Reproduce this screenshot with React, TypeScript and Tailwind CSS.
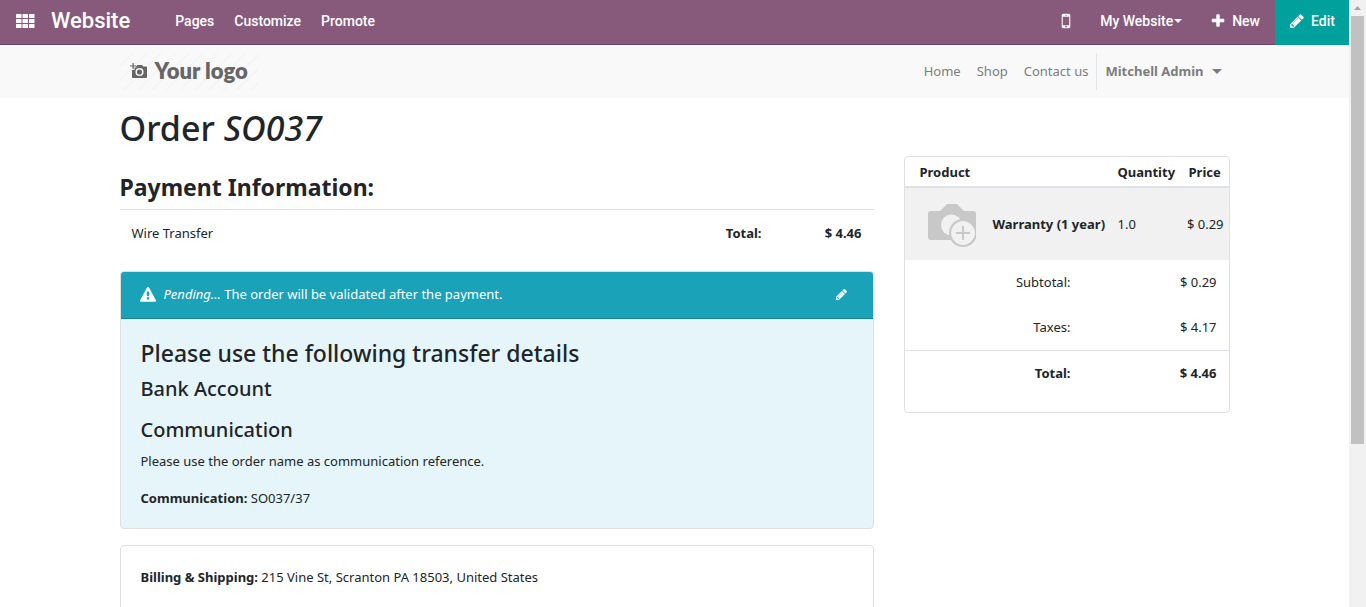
import { ReactNode } from 'react';

const ICONS = {
  pencil:
    'M491 1536l91-91-235-235-91 91v107h128v128h107zm523-928q0-22-22-22-10 0-17 7l-542 542q-7 7-7 17 0 22 22 22 10 0 17-7l542-542q7-7 7-17zm-54-192l416 416-832 832h-416v-416zm683 96q0 53-37 90l-166 166-416-416 166-165q36-38 90-38 53 0 91 38l235 234q37 39 37 91z',
  plus: 'M1600 736v192q0 40-28 68t-68 28h-416v416q0 40-28 68t-68 28h-192q-40 0-68-28t-28-68v-416h-416q-40 0-68-28t-28-68v-192q0-40 28-68t68-28h416v-416q0-40 28-68t68-28h192q40 0 68 28t28 68v416h416q40 0 68 28t28 68z',
  mobile:
    'M976 1408q0-33-23.5-56.5t-56.5-23.5-56.5 23.5-23.5 56.5 23.5 56.5 56.5 23.5 56.5-23.5 23.5-56.5zm208-160v-704q0-13-9.5-22.5t-22.5-9.5h-512q-13 0-22.5 9.5t-9.5 22.5v704q0 13 9.5 22.5t22.5 9.5h512q13 0 22.5-9.5t9.5-22.5zm-192-848q0-16-16-16h-160q-16 0-16 16t16 16h160q16 0 16-16zm288-16v1024q0 52-38 90t-90 38h-512q-52 0-90-38t-38-90v-1024q0-52 38-90t90-38h512q52 0 90 38t38 90z',
  warning:
    'M1024 1375v-190q0-14-9.5-23.5t-22.5-9.5h-192q-13 0-22.5 9.5t-9.5 23.5v190q0 14 9.5 23.5t22.5 9.5h192q13 0 22.5-9.5t9.5-23.5zm-2-374l18-459q0-12-10-19-13-11-24-11h-220q-11 0-24 11-10 7-10 21l17 457q0 10 10 16.5t24 6.5h185q14 0 23.5-6.5t10.5-16.5zm-14-934l768 1408q35 63-2 126-17 29-46.5 46t-63.5 17h-1536q-34 0-63.5-17t-46.5-46q-37-63-2-126l768-1408q17-31 47-49t65-18 65 18 47 49z',
};

function Icon({ name, className }: { name: keyof typeof ICONS; className: string }) {
  return (
    <svg viewBox="0 0 1792 1792" fill="currentColor" className={className} aria-hidden="true">
      <path d={ICONS[name]} />
    </svg>
  );
}

function Caret({ className }: { className: string }) {
  return (
    <svg viewBox="0 0 8 4" fill="currentColor" className={className} aria-hidden="true">
      <path d="M0 0h8L4 4z" />
    </svg>
  );
}

function TopBar() {
  return (
    <header className="flex h-[45px] items-stretch border-b border-[#68465f] bg-[#875a7b] font-[Roboto,sans-serif] text-sm font-medium text-white">
      <button className="flex items-center px-4 pb-0.5" aria-label="Applications">
        <svg viewBox="0 0 19 14" fill="currentColor" className="h-[14px] w-[19px]">
          {[0, 5, 10].map((y) =>
            [0, 6.5, 13].map((x) => <rect key={`${x}-${y}`} x={x} y={y} width="5.500" height="4" rx="0.6" />)
          )}
        </svg>
      </button>
      <a href="#" className="flex items-center pb-0.5 text-[22px]">Website</a>
      <nav className="ml-[45px] flex items-center gap-5 pb-0.5">
        <a href="#">Pages</a>
        <a href="#">Customize</a>
        <a href="#">Promote</a>
      </nav>
      <div className="ml-auto flex items-stretch">
        <button className="px-6 pb-0.5" aria-label="Mobile preview">
          <Icon name="mobile" className="size-5" />
        </button>
        <button className="flex items-center gap-px pb-0.5">
          My Website
          <Caret className="h-1 w-2" />
        </button>
        <button className="flex items-center gap-1.5 pl-7 pr-[15px] pb-0.5">
          <Icon name="plus" className="size-4" />
          New
        </button>
      </div>
      <button className="-mb-px flex w-[74px] items-center justify-center gap-1.5 bg-[#00a09d] pb-[3px]">
        <Icon name="pencil" className="size-4" />
        Edit
      </button>
    </header>
  );
}

function Logo() {
  return (
    <a
      href="#"
      className="flex h-[37px] w-[138px] items-center gap-2 bg-[repeating-linear-gradient(135deg,#f9f9f9_0px,#f9f9f9_8px,#f5f5f5_8px,#f5f5f5_10px)] pl-2.5 pb-0.5 font-[Lato,sans-serif] text-[22px] font-extrabold text-[#666]"
    >
      <svg viewBox="0 0 17 16" className="h-4 w-[17px]" aria-hidden="true">
        <path fill="currentColor" d="M2.5 0h1.200v2.400h2.400v1.200H3.700V6H2.500V3.600H0V2.400h2.500zM7 2h5l1 1.500h3q1 0 1 1V14q0 1-1 1H3q-1 0-1-1V7h2.500V4.500H6z" />
        <circle cx="9.500" cy="9" r="3.300" fill="none" stroke="#f9f9f9" strokeWidth="1.500" />
      </svg>
      Your logo
    </a>
  );
}

function SiteNav() {
  return (
    <div className="bg-[#f9f9f9]">
      <div className="mx-auto flex h-[53px] max-w-[1140px] items-center px-[15px]">
        <Logo />
        <nav className="ml-auto flex items-center text-[#7d7d7d]">
          <a href="#" className="px-2">Home</a>
          <a href="#" className="px-2">Shop</a>
          <a href="#" className="px-2">Contact us</a>
          <button className="flex h-[37px] items-center gap-2 border-l border-[#e3e6ec] px-2 font-bold">
            Mitchell Admin
            <Caret className="h-[5px] w-2.5" />
          </button>
        </nav>
      </div>
    </div>
  );
}

function Card({ className = '', children }: { className?: string; children: ReactNode }) {
  return <section className={`rounded border border-[#dee0e2] ${className}`}>{children}</section>;
}

function Placeholder() {
  return (
    <svg viewBox="0 0 48 44" className="h-11 w-12" role="img" aria-label="Warranty (1 year)">
      <path fill="#c8c8c8" d="M3 8h9l6-6q1-1 2-1h8q1 0 2 1l6 6h9q3 0 3 3v23q0 3-3 3H3q-3 0-3-3V11q0-3 3-3z" />
      <circle cx="23.500" cy="22" r="10.500" fill="#f1f1f1" />
      <circle cx="35" cy="30" r="14" fill="#c8c8c8" />
      <circle cx="35" cy="30" r="11.500" fill="#f1f1f1" stroke="#f1f1f1" strokeWidth="1" />
      <path stroke="#c8c8c8" strokeWidth="2" d="M35 23v14M28 30h14" />
    </svg>
  );
}

function OrderSummary() {
  return (
    <Card className="h-[257px]">
      <table className="w-full">
        <thead>
          <tr className="h-[30px] border-b-2 border-[#dee2e6] text-left font-bold">
            <th className="pt-0.5 pl-[15px]" colSpan={2}>Product</th>
            <th className="w-[69px] pt-0.5">Quantity</th>
            <th className="w-[42px] pt-0.5 pl-0.5">Price</th>
          </tr>
        </thead>
        <tbody>
          <tr className="h-[73px] bg-[#f1f1f1]">
            <td className="w-[88px] pt-0.5 pl-[23px]"><Placeholder /></td>
            <td className="font-bold">Warranty (1 year)</td>
            <td>1.0</td>
            <td className="pr-[5px] text-right whitespace-nowrap">$ 0.29</td>
          </tr>
        </tbody>
      </table>
      <table className="w-full text-right">
        <tbody>
          <tr className="h-[45px]">
            <td>Subtotal:</td>
            <td className="w-[158px] pr-3">$ 0.29</td>
          </tr>
          <tr className="h-[45px]">
            <td>Taxes:</td>
            <td className="pr-3">$ 4.17</td>
          </tr>
          <tr className="h-[46px] border-t border-[#dee2e6] font-bold">
            <td>Total:</td>
            <td className="pr-3">$ 4.46</td>
          </tr>
        </tbody>
      </table>
    </Card>
  );
}

function PaymentInfo() {
  return (
    <div>
      <h2 className="mt-4 text-[23px] leading-[30px] font-bold">Payment Information:</h2>
      <table className="mt-[7px] w-full border-t border-[#dee2e6]">
        <tbody>
          <tr className="h-[47px]">
            <td className="pl-3">Wire Transfer</td>
            <td className="text-right font-bold">Total:</td>
            <td className="w-[112px] pr-3 text-right font-bold">$ 4.46</td>
          </tr>
        </tbody>
      </table>

      <Card className="mt-[14px] overflow-hidden bg-[#e6f5f9]">
        <div className="flex h-[47px] items-center border-b border-[#158697] bg-[#19a2b8] px-[19px] text-white">
          <Icon name="warning" className="mr-2 size-4" />
          <p><em>Pending...</em> The order will be validated after the payment.</p>
          <button className="ml-auto mr-1.5" aria-label="Edit message">
            <Icon name="pencil" className="size-[13px]" />
          </button>
        </div>
        <div className="px-5 pt-5 pb-[19px]">
          <h3 className="text-[23px] leading-[29px] font-medium">Please use the following transfer details</h3>
          <h4 className="mt-2 text-xl leading-[26px] font-medium">Bank Account</h4>
          <h4 className="mt-[15px] text-xl leading-[26px] font-medium">Communication</h4>
          <p className="mt-2">Please use the order name as communication reference.</p>
          <p className="mt-4"><b className="font-bold">Communication:</b> SO037/37</p>
        </div>
      </Card>

      <Card className="mt-4 px-5 py-[21px]">
        <b className="font-bold">Billing &amp; Shipping:</b> 215 Vine St, Scranton PA 18503, United States
      </Card>
    </div>
  );
}

function Scrollbar() {
  return (
    <div className="flex w-[17px] shrink-0 flex-col items-center bg-[#f1f1f1]" aria-hidden="true">
      <svg viewBox="0 0 17 16" className="h-4 w-[17px] shrink-0">
        <path fill="#a3a3a3" d="M5 10h7L8.500 6z" />
      </svg>
      <div className="h-[70.500%] w-[13px] bg-[#c1c1c1]" />
    </div>
  );
}

export default function App() {
  return (
    <div className="flex h-screen overflow-hidden bg-white font-['Noto_Sans',sans-serif] text-[13px] leading-[21px] font-normal text-[#212529]">
      <div className="min-w-0 flex-1">
        <TopBar />
        <SiteNav />
        <main className="mx-auto max-w-[1140px] px-[15px] pt-[9px]">
          <h1 className="text-[34px] leading-[42px] font-medium">
            Order <em>SO037</em>
          </h1>
          <div className="mt-[7px] grid grid-cols-[1fr_326px] items-start gap-[30px]">
            <PaymentInfo />
            <OrderSummary />
          </div>
        </main>
      </div>
      <Scrollbar />
    </div>
  );
}
